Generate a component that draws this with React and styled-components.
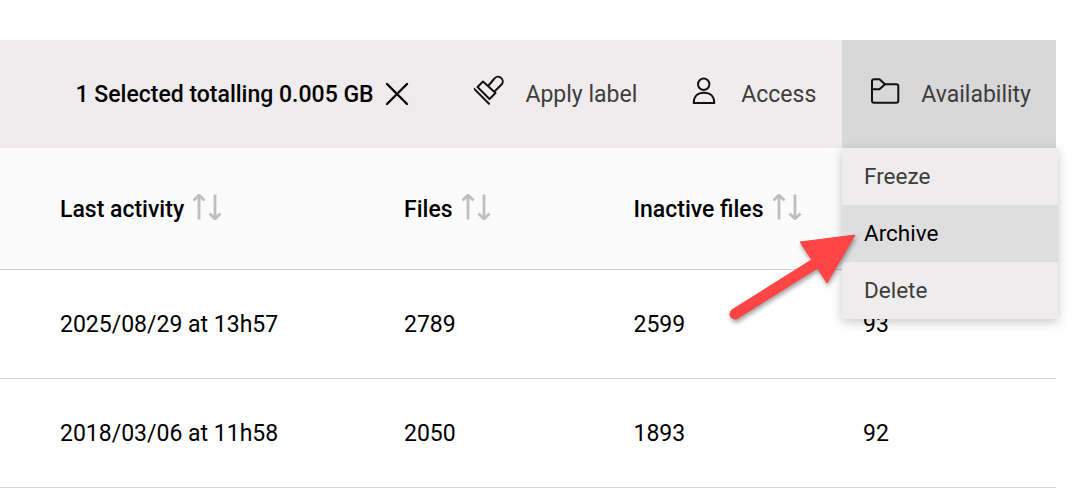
import React from "react";
import styled, { createGlobalStyle } from "styled-components";

const GlobalStyle = createGlobalStyle`
  html, body {
    margin: 0;
    background: #fff;
    font-family: Roboto, "Liberation Sans", sans-serif;
  }
`;

const Page = styled.div`
  position: relative;
  width: 1056px;
  height: 502px;
  padding-top: 40px;
  box-sizing: border-box;
`;

const Toolbar = styled.div`
  display: flex;
  align-items: stretch;
  height: 108px;
  background: #f0eced;
`;

const Selection = styled.div`
  display: flex;
  align-items: center;
  margin-left: 75.5px;
  margin-right: auto;
  padding-top: 1px;
  font-size: 23px;
  font-weight: 500;
  color: #000;
`;

const CloseButton = styled.span`
  display: flex;
  margin: -1px 0 0 11px;
`;

const Action = styled.div`
  display: flex;
  align-items: center;
  gap: 21px;
  padding: ${(p) => (p.$active ? "1px 25px 0 28px" : "1px 26px 0 27px")};
  background: ${(p) => (p.$active ? "#d8d8d8" : "transparent")};
  font-size: 23px;
  color: #3d3d3d;
`;

const ActionIcon = styled.svg`
  width: 30px;
  height: 30px;
  margin-top: -9px;
  fill: none;
  stroke: #111;
  stroke-width: 2;
  stroke-linejoin: round;
  stroke-linecap: round;
`;

const Row = styled.div`
  display: grid;
  grid-template-columns: 344px 229.5px 229.5px 1fr;
  align-items: center;
  height: ${(p) => (p.$head ? "120px" : "107px")};
  padding: 1px 0 0 60px;
  border-bottom: 1px solid #d2d2d2;
  background: ${(p) => (p.$head ? "#fbfbfb" : "#fff")};
  font-size: 23px;
  font-weight: ${(p) => (p.$head ? 500 : 400)};
  color: #000;
`;

const HeadCell = styled.div`
  display: flex;
  align-items: center;
  gap: 9px;
`;

const SortIcon = styled.svg`
  width: 30px;
  height: 26px;
  margin-top: -5px;
  fill: none;
  stroke: #bebebe;
  stroke-width: 2.8;
`;

const Menu = styled.div`
  position: absolute;
  top: 148px;
  left: 842px;
  width: 216px;
  background: #eeecec;
  box-shadow: 0 3px 10px rgba(0, 0, 0, 0.22);
`;

const MenuItem = styled.div`
  display: flex;
  align-items: center;
  box-sizing: border-box;
  height: 57px;
  padding: 0 0 2px 22px;
  font-size: 22.5px;
  color: ${(p) => (p.$active ? "#000" : "#3d3d3d")};
  background: ${(p) => (p.$active ? "#dedede" : "transparent")};
`;

const Arrow = styled.svg`
  position: absolute;
  top: 225px;
  left: 720px;
  width: 150px;
  height: 105px;
  overflow: visible;
  filter: drop-shadow(1px 3px 2px rgba(0, 0, 0, 0.35));
`;

const SortArrows = () => (
  <SortIcon viewBox="0 0 30 26">
    <path d="M6 25.5V1M0.5 6.5L6 1l5.500 5.500" />
    <path d="M22 0.5V25M16.500 19.500L22 25l5.500-5.500" />
  </SortIcon>
);

const columns = ["Last activity", "Files", "Inactive files"];

const rows = [
  ["2025/08/29 at 13h57", "2789", "2599", "93"],
  ["2018/03/06 at 11h58", "2050", "1893", "92"],
];

const App = () => {
  return (
    <Page>
      <GlobalStyle />
      <Toolbar>
        <Selection>
          1 Selected totalling 0.005 GB
          <CloseButton>
            <svg width="24" height="24" viewBox="0 0 24 24" fill="none" stroke="#000" strokeWidth="2.4" strokeLinecap="round">
              <path d="M2 2l20 20M22 2L2 22" />
            </svg>
          </CloseButton>
        </Selection>
        <Action>
          <ActionIcon viewBox="5 3 30 30">
            <path d="M5 16.700l15 15" />
            <path d="M8.500 15L14 9.500 26.500 21l-6 6z" />
            <path d="M20 13l5-6a3 3 0 0 1 8 5l-7 7" />
          </ActionIcon>
          Apply label
        </Action>
        <Action>
          <ActionIcon viewBox="3 3 30 30">
            <circle cx="16.700" cy="12.300" r="5.700" />
            <path d="M6.700 31C6.700 24 11 20.700 17 20.700S27.300 24 27.300 31z" />
          </ActionIcon>
          Access
        </Action>
        <Action $active>
          <ActionIcon viewBox="4 3 30 30">
            <path d="M6 28.700V9.300a2 2 0 0 1 2-2h5.500L19 12.300h11.300a2 2 0 0 1 2 2v14.400a2 2 0 0 1-2 2H8a2 2 0 0 1-2-2z" />
            <path d="M6 17.300h7.500l5.500-5" />
          </ActionIcon>
          Availability
        </Action>
      </Toolbar>
      <Row $head>
        {columns.map((name) => (
          <HeadCell key={name}>
            {name}
            <SortArrows />
          </HeadCell>
        ))}
      </Row>
      {rows.map((row) => (
        <Row key={row[0]}>
          {row.map((value) => (
            <div key={value}>{value}</div>
          ))}
        </Row>
      ))}
      <Menu>
        <MenuItem>Freeze</MenuItem>
        <MenuItem $active>Archive</MenuItem>
        <MenuItem>Delete</MenuItem>
      </Menu>
      <Arrow viewBox="0 0 150 105">
        <path d="M15 89L93 40" stroke="#ff4545" strokeWidth="11" strokeLinecap="round" fill="none" />
        <path d="M135 10L80 17L107 58Z" fill="#ff4545" stroke="#ff4545" strokeWidth="1" strokeLinejoin="round" />
      </Arrow>
    </Page>
  );
};

export default App;
